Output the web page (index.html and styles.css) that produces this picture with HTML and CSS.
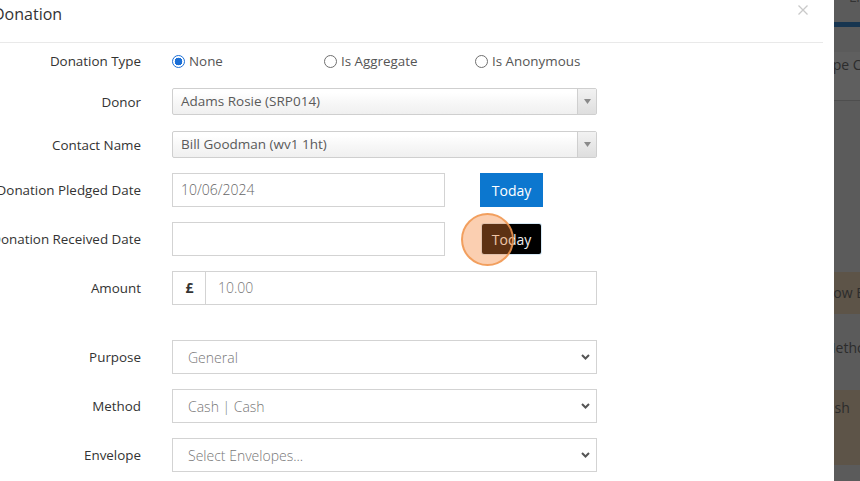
FILE: index.html
```html
<!DOCTYPE html>
<html lang="en">
<head>
<meta charset="utf-8">
<title>Donation</title>
<link rel="stylesheet" href="styles.css">
</head>
<body>
<div class="screen">
  <div class="modal">
    <div class="modal-header">
      <h4 class="modal-title">Donation</h4>
      <button class="close" type="button" aria-label="Close">
        <svg width="10" height="10" viewBox="0 0 10 10"><path d="M0.5 0.5 L9.5 9.5 M9.5 0.5 L0.5 9.5" stroke="#c9c9c9" stroke-width="1.3" fill="none"/></svg>
      </button>
    </div>
    <div class="modal-body">
      <div class="row row-radio">
        <div class="lbl"><span>Donation Type</span></div>
        <div class="radios">
          <label class="radio"><span class="dot checked"></span>None</label>
          <label class="radio"><span class="dot"></span>Is Aggregate</label>
          <label class="radio"><span class="dot"></span>Is Anonymous</label>
        </div>
      </div>
      <div class="row row-chosen row-donor">
        <div class="lbl"><span>Donor</span></div>
        <div class="chosen"><span class="chosen-text">Adams Rosie (SRP014)</span><span class="chosen-arrow"><svg width="7" height="5" viewBox="0 0 7 5"><path d="M0 0 H7 L3.5 5 Z" fill="#8a8a8a"/></svg></span></div>
      </div>
      <div class="row row-chosen">
        <div class="lbl"><span>Contact Name</span></div>
        <div class="chosen"><span class="chosen-text">Bill Goodman (wv1 1ht)</span><span class="chosen-arrow"><svg width="7" height="5" viewBox="0 0 7 5"><path d="M0 0 H7 L3.5 5 Z" fill="#8a8a8a"/></svg></span></div>
      </div>
      <div class="row">
        <div class="lbl"><span>Donation Pledged Date</span></div>
        <div class="date-field">
          <div class="input date-input">10/06/2024</div>
          <button class="btn btn-primary" type="button">Today</button>
        </div>
      </div>
      <div class="row">
        <div class="lbl"><span>Donation Received Date</span></div>
        <div class="date-field">
          <div class="input date-input"></div>
          <div class="btn-wrap">
            <button class="btn btn-dark" type="button">Today</button>
            <span class="click-marker"></span>
          </div>
        </div>
      </div>
      <div class="row row-amount">
        <div class="lbl"><span>Amount</span></div>
        <div class="input-group">
          <span class="addon">£</span>
          <span class="group-input">10.00</span>
        </div>
      </div>
      <div class="row">
        <div class="lbl"><span>Purpose</span></div>
        <div class="select"><span>General</span><svg class="chev" width="9" height="6" viewBox="0 0 9 6"><path d="M1 1 L4.5 4.5 L8 1" stroke="#555" stroke-width="2" fill="none"/></svg></div>
      </div>
      <div class="row">
        <div class="lbl"><span>Method</span></div>
        <div class="select"><span>Cash | Cash</span><svg class="chev" width="9" height="6" viewBox="0 0 9 6"><path d="M1 1 L4.5 4.5 L8 1" stroke="#555" stroke-width="2" fill="none"/></svg></div>
      </div>
      <div class="row">
        <div class="lbl"><span>Envelope</span></div>
        <div class="select"><span>Select Envelopes...</span><svg class="chev" width="9" height="6" viewBox="0 0 9 6"><path d="M1 1 L4.5 4.5 L8 1" stroke="#555" stroke-width="2" fill="none"/></svg></div>
      </div>
    </div>
  </div>
  <div class="backdrop">
    <div class="bd bd-top"><span class="bd-text bd-l">Li</span></div>
    <div class="bd bd-navy"></div>
    <div class="bd bd-gap1"></div>
    <div class="bd bd-head"><span class="bd-text bd-type">Type Class</span></div>
    <div class="bd bd-gap2"></div>
    <div class="bd bd-brown bd-b1"><span class="bd-text bd-show">Show Bu</span></div>
    <div class="bd bd-gap3"><span class="bd-text bd-method">Method</span></div>
    <div class="bd bd-brown bd-b2"><span class="bd-text bd-cash">Cash</span></div>
    <div class="bd bd-gap4"></div>
  </div>
</div>
</body>
</html>
```
FILE: styles.css
```css
* { box-sizing: border-box; }
html, body {
  margin: 0;
  padding: 0;
  width: 860px;
  height: 481px;
  overflow: hidden;
  background: #5b5b5b;
  font-family: "Open Sans", "DejaVu Sans", sans-serif;
  font-size: 14px;
  color: #333;
}
.screen {
  display: flex;
  width: 860px;
  height: 481px;
}
.modal {
  width: 834px;
  height: 481px;
  background: #fff;
  flex: none;
}
.modal-header {
  position: relative;
  height: 43px;
  width: 823px;
  border-bottom: 1px solid #e9e9e9;
  padding-top: 2px;
}
.modal-title {
  margin: 0 0 0 -7px;
  font-size: 16px;
  font-weight: 400;
  line-height: 24px;
  color: #333;
}
.close {
  position: absolute;
  right: 15px;
  top: 5px;
  padding: 0;
  border: 0;
  background: none;
  width: 10px;
  height: 10px;
  display: block;
}
.close svg { display: block; }
.modal-body {
  padding-top: 8px;
}
.row {
  display: grid;
  grid-template-columns: 141px 425px;
  column-gap: 31px;
  align-items: center;
  height: 34px;
  margin-bottom: 15px;
}
.row-radio {
  height: 20px;
  margin-bottom: 17px;
}
.row-chosen {
  height: 27px;
}
.row-donor { margin-bottom: 16px; }
.row-amount { margin-bottom: 35px; }
.lbl {
  display: flex;
  justify-content: flex-end;
  white-space: nowrap;
  color: #333;
  font-size: 13.4px;
  line-height: 20px;
}
.radios {
  display: grid;
  grid-template-columns: 152px 151px 150px;
  align-items: center;
  color: #555;
  font-size: 13.4px;
}
.radio {
  display: flex;
  align-items: center;
  gap: 4px;
  line-height: 20px;
  white-space: nowrap;
}
.dot {
  width: 13px;
  height: 13px;
  border-radius: 50%;
  border: 1px solid #6f6f6f;
  background: #fff;
  flex: none;
}
.dot.checked {
  border: 1.5px solid #1b6fd6;
  background: radial-gradient(circle, #1b6fd6 0 3.6px, #fff 4.1px);
}
.chosen {
  display: flex;
  align-items: stretch;
  height: 27px;
  border: 1px solid #cfcfcf;
  border-radius: 2px;
  background: linear-gradient(#ffffff 15%, #f7f7f7 55%, #f0f0f0 100%);
  color: #5a5a5a;
  font-size: 13.5px;
}
.chosen-text {
  flex: 1;
  padding-left: 8px;
  line-height: 25px;
}
.chosen-arrow {
  width: 19px;
  border-left: 1px solid #cfcfcf;
  background: linear-gradient(#f2f2f2, #dedede);
  display: flex;
  align-items: center;
  justify-content: center;
}
.chosen-arrow svg { display: block; margin-left: 1px; }
.date-field {
  display: flex;
  align-items: center;
  height: 34px;
}
.input {
  height: 34px;
  border: 1px solid #d3d3d3;
  background: #fff;
  color: #666;
  padding-left: 8px;
  line-height: 32px;
  font-weight: 300;
}
.date-input {
  width: 273px;
}
.btn {
  font-family: "Open Sans", "DejaVu Sans", sans-serif;
  font-size: 14px;
  border: 0;
  color: #fff;
  padding: 0;
  display: block;
}
.btn-primary {
  margin-left: 35px;
  width: 63px;
  height: 34px;
  background: #0c77cf;
}
.btn-wrap {
  position: relative;
  margin-left: 37px;
  height: 30px;
}
.btn-dark {
  width: 59px;
  height: 30px;
  background: #000;
  border-radius: 2px;
  box-shadow: 0 0 0 1px #d6e9f6;
  color: #eee;
}
.click-marker {
  position: absolute;
  left: -21px;
  top: -11px;
  width: 53px;
  height: 53px;
  border-radius: 50%;
  border: 2px solid rgba(240, 150, 80, 0.85);
  background: rgba(245, 130, 50, 0.38);
  pointer-events: none;
}
.input-group {
  display: flex;
  height: 34px;
  border: 1px solid #d3d3d3;
  background: #fff;
}
.addon {
  width: 33px;
  flex: none;
  border-right: 1px solid #d3d3d3;
  text-align: center;
  font-weight: 700;
  line-height: 32px;
  color: #333;
  padding-left: 1px;
}
.group-input {
  padding-left: 12px;
  line-height: 32px;
  color: #777;
  font-weight: 300;
}
.select {
  display: flex;
  align-items: center;
  justify-content: space-between;
  height: 34px;
  border: 1px solid #d3d3d3;
  background: #fff;
  color: #777;
  padding-left: 15px;
  padding-right: 6px;
  font-weight: 300;
}
.chev { display: block; }

/* backdrop strip showing dimmed page */
.backdrop {
  width: 26px;
  flex: none;
  height: 481px;
  overflow: hidden;
  background: #5b5b5b;
  display: flex;
  flex-direction: column;
}
.bd {
  flex: none;
  overflow: hidden;
  white-space: nowrap;
  position: relative;
}
.bd-text {
  display: block;
  color: #2c2c2c;
  font-size: 14px;
  line-height: 20px;
}
.bd-top { height: 22px; }
.bd-l { margin-top: -13px; margin-left: 15px; color: #333; }
.bd-navy { height: 5px; background: #173550; }
.bd-gap1 { height: 25px; }
.bd-head {
  height: 49px;
  background: #5f5f5f;
  border-bottom: 1px solid #4e4e4e;
  padding-top: 3px;
}
.bd-type { margin-left: -16px; }
.bd-gap2 { height: 171px; }
.bd-brown { background: #5d5448; }
.bd-b1 { height: 42px; padding-top: 11px; }
.bd-show { margin-left: -17px; }
.bd-gap3 { height: 76px; padding-top: 24px; }
.bd-method { margin-left: -11px; }
.bd-b2 { height: 75px; padding-top: 8px; }
.bd-cash { margin-left: -16px; }
.bd-gap4 { height: 16px; }
```
